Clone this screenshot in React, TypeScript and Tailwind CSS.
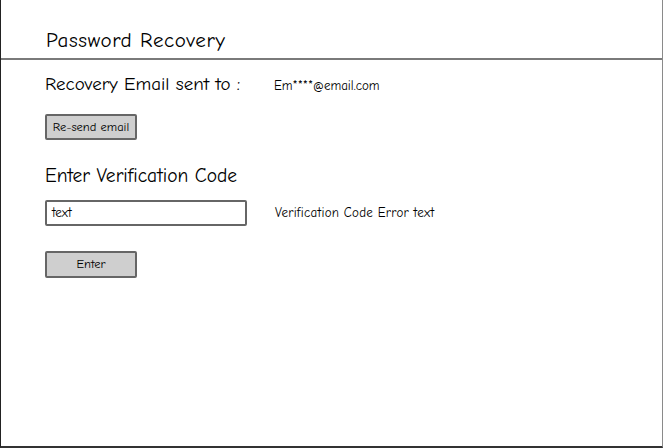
import React from "react";

export default function App() {
  const font = { fontFamily: '"Comic Sans MS", "Comic Neue", "Noto Sans", sans-serif' };
  return (
    <div
      className="w-[663px] h-[448px] bg-white border-l border-l-[#222] border-r border-r-[#8a8a8a] border-b-2 border-b-[#333] text-black flex flex-col"
      style={font}
    >
      <div className="h-[58px] pt-[28px] pl-[45px] text-[21px] leading-[24px] tracking-[0.03em]">Password Recovery</div>
      <div className="h-[2px] bg-[#7a7a7a]" />
      <div className="pl-[44px] flex flex-col items-start">
        <div className="mt-[12px] grid grid-cols-[229px_auto] items-baseline">
          <div className="text-[19px] leading-[24px]">Recovery Email sent to :</div>
          <div className="text-[13px] leading-[16px]">Em****@email.com</div>
        </div>
        <button className="mt-[18px] w-[92px] h-[26px] bg-[#cfcfcf] border-2 border-[#666] rounded-[2px] text-[12.5px] leading-none text-black">
          Re-send email
        </button>
        <div className="mt-[24px] text-[19.5px] leading-[24px]">Enter Verification Code</div>
        <div className="mt-[12px] flex items-center">
          <div className="w-[202px] h-[26px] border-2 border-[#666] rounded-[2px] flex items-center pl-[5px] text-[13px]">
            text
          </div>
          <div className="ml-[28px] text-[13px] leading-[16px] tracking-[0.02em]">Verification Code Error text</div>
        </div>
        <button className="mt-[25px] w-[92px] h-[27px] bg-[#cfcfcf] border-2 border-[#666] rounded-[2px] text-[12.5px] leading-none text-black">
          Enter
        </button>
      </div>
    </div>
  );
}
